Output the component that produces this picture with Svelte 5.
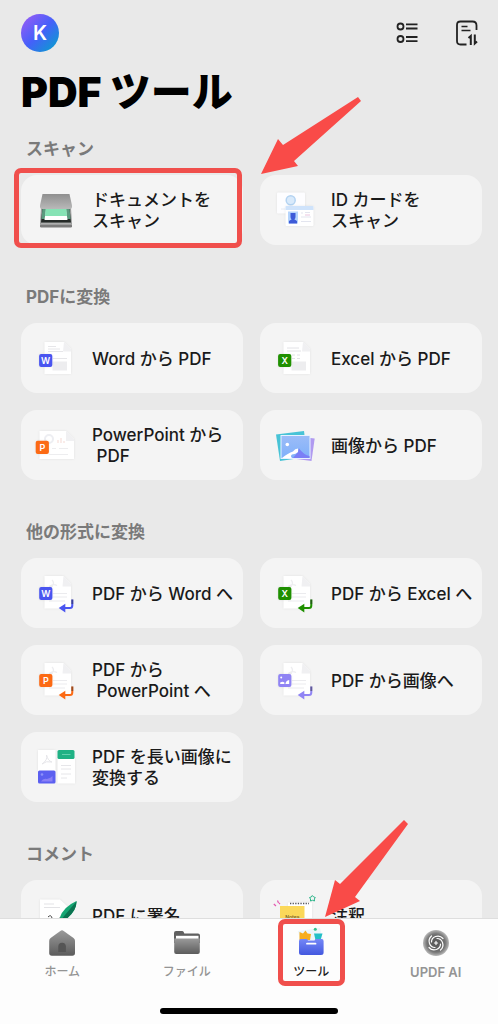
<script lang="ts">
  type Tool = { icon: string; lines: string[]; marked?: boolean };
  type Group = { title: string; tools: Tool[] };

  const groups: Group[] = [
    {
      title: "スキャン",
      tools: [
        { icon: "scanner", lines: ["ドキュメントを", "スキャン"], marked: true },
        { icon: "idcard", lines: ["ID カードを", "スキャン"] },
      ],
    },
    {
      title: "PDFに変換",
      tools: [
        { icon: "from-word", lines: ["Word から PDF"] },
        { icon: "from-excel", lines: ["Excel から PDF"] },
        { icon: "from-ppt", lines: ["PowerPoint から", " PDF"] },
        { icon: "images", lines: ["画像から PDF"] },
      ],
    },
    {
      title: "他の形式に変換",
      tools: [
        { icon: "to-word", lines: ["PDF から Word へ"] },
        { icon: "to-excel", lines: ["PDF から Excel へ"] },
        { icon: "to-ppt", lines: ["PDF から", " PowerPoint へ"] },
        { icon: "to-image", lines: ["PDF から画像へ"] },
        { icon: "long-image", lines: ["PDF を長い画像に", "変換する"] },
      ],
    },
    {
      title: "コメント",
      tools: [
        { icon: "sign", lines: ["PDF に署名"] },
        { icon: "notes", lines: ["注釈"] },
      ],
    },
  ];

  const tabs = [
    { id: "home", label: "ホーム" },
    { id: "files", label: "ファイル" },
    { id: "tools", label: "ツール" },
    { id: "ai", label: "UPDF AI", latin: true },
  ];

  const tints: Record<string, string> = {
    word: "#4a55f0",
    excel: "#1f9000",
    ppt: "#fc6a14",
    image: "#9084f4",
  };
  const letters: Record<string, string> = { word: "W", excel: "X", ppt: "P" };

  let active = $state("tools");
</script>

{#snippet badge(kind: string, x: number, y: number)}
  <g transform="translate({x} {y})">
    <rect x="-6.6" y="-6.6" width="13.2" height="13.2" rx="2" fill={tints[kind]} class="lift" />
    {#if letters[kind]}
      <text y="3.2" class="letter">{letters[kind]}</text>
    {:else}
      <circle cx="-3.6" cy="-3" r="1" fill="#fff" />
      <path d="M-4.6 3.6 V2 Q-2 .6 -.4 2 V3.6 Z M.6 3.6 Q1 .2 4.4 -.4 V3.6 Z" fill="#fff" />
    {/if}
  </g>
{/snippet}

{#snippet toolIcon(name: string)}
  <svg class="icon" viewBox="0 0 44 44" aria-hidden="true">
    {#if name === "scanner"}
      <path d="M7 20 H37 L38 36 H6Z" fill="#9a9c9b" />
      <path d="M8.500 20 H35.500 L37 34.500 H7Z" fill="#252a28" />
      <path d="M8.500 20 H12 L11 31 H7.500Z M32 20 H35.500 L36.500 31 H33Z" fill="#5b9b7f" />
      <path d="M12 21 H32 L33.500 32 H10.500Z" fill="#fff" />
      <path d="M11.500 21 H32.500 L33 28 H11Z" fill="#86e3b5" />
      <path d="M8.500 6 H35.500 L38 17.500 V19 Q38 21 36 21 H8 Q6 21 6 19 V17.500 Z" fill="url(#lid)" />
      <rect x="6" y="36" width="32" height="3.400" rx="1.200" fill="#7b7b7b" />
      <path d="M7 36 H37" stroke="#c2c2c2" />
    {:else if name === "idcard"}
      <rect x="4" y="4.500" width="28" height="21" rx="1" fill="#fdfdff" class="lift" />
      <circle cx="17.700" cy="12.300" r="4.500" fill="#d9eafb" stroke="#b4d3f1" stroke-width="1.500" />
      <path d="M8 21 H12" stroke="#e6eaf2" />
      <rect x="12.500" y="18" width="28" height="20" rx="1" fill="#fff" class="lift" />
      <path d="M12.500 22 V19 Q12.500 18 13.500 18 H39.500 Q40.500 18 40.500 19 V22Z" fill="#cfe3fb" />
      <rect x="15" y="23.500" width="10" height="12" fill="#b5d4fc" />
      <path d="M17.500 25 H22.500 V29 Q22.500 31 21.300 31.300 L24 33 V35.500 H16 V33 L18.700 31.300 Q17.500 31 17.500 29Z" fill="#3e5bd8" />
      <path d="M28 25 H30 M32 24.500 H37 M28 29 H38 M28 33.500 H38" stroke="#e3e5ef" />
      <path d="M32 27 H37" stroke="#eac5df" />
    {:else if name === "from-word" || name === "from-excel"}
      <path d="M10.500 6 H30 L37 13 V38 H10.500Z" fill="#fff" class="lift" />
      <path d="M30 6 L37 13 V15.500 H29Z" fill="#f0f0f2" />
      {#if name === "from-word"}
        <path d="M14 10.500 H22 M14 13 H26 M14 15.500 H29 M19 22.500 H33" stroke="#e6e6e9" />
      {:else}
        <path d="M14 12 H26 M14 15 H28 M19 19 H22 M24 19 H27 M19 22.500 H22 M24 22.500 H27" stroke="#e2e2e6" />
      {/if}
      <rect x="18.500" y="25.500" width="14.500" height="9" fill="#ededef" />
      {@render badge(name.slice(5), 11.7, 24.5)}
    {:else if name === "from-ppt"}
      <path d="M5.500 8 H32 L40 16 V36 H5.500Z" fill="#fff" class="lift" />
      <path d="M32 8 L40 16 V18 H32Z" fill="#f0f0f2" />
      <circle cx="15" cy="16" r="4" fill="none" stroke="#edeef2" stroke-width="2" />
      <path d="M24 20 V17 M27 20 V15 M30 20 V18" stroke="#f9e6e2" stroke-width="1.500" />
      <path d="M18 25.500 H22 M25 25.500 H34 M15 31.500 H34" stroke="#ededef" />
      {@render badge("ppt", 8.3, 24.3)}
    {:else if name === "images"}
      <path d="M3 11.500 L31 8 L34 34 L7 38Z" fill="#48c3d6" />
      <path d="M12 12 L41.700 15.500 L38.500 38 L16 35Z" fill="#b09af0" />
      <rect x="8" y="12.500" width="29" height="23" fill="url(#sky)" stroke="#e6f1ff" />
      <circle cx="14.300" cy="21.500" r="1.800" fill="#fff" />
      <path d="M20 35 L25 29 L26 25.500 Q31 32 36.500 33 V35Z" fill="#7b7ff6" />
      <path d="M9 35 Q15 30 20 28.500 Q22 25.500 25 25.500 V29 Q23 31 19 31.500 Q17 33 19 35Z" fill="#fff" />
    {:else if name.startsWith("to-")}
      <path d="M10.500 5 H29.500 L37 13 V37.500 H10.500Z" fill="#fff" class="lift" />
      <path d="M29.500 5 L37 13 V15.500 H28.500Z" fill="#f0f0f2" />
      <path d="M18 9 Q21 12 18 15.500 Q15 17 16 15 Q19 12.500 23 14.500" fill="none" stroke="#ededf0" stroke-width="1.300" />
      <path d="M19 22.500 H33 M19 26 H33 M15 30 H31" stroke="#ebebee" />
      {@render badge(name.slice(3), 11.8, 22.5)}
      <path d="M38.300 28.500 V34.500 Q38.300 37 36 37 H30" fill="none" stroke={tints[name.slice(3)]} stroke-width="2" />
      <path d="M38.300 28.500 V33" stroke="#26262c" stroke-opacity=".45" stroke-width="2" />
      <path d="M24.700 37 L31.300 32.700 V41.500Z" fill={tints[name.slice(3)]} />
    {:else if name === "long-image"}
      <rect x="4" y="5" width="17.500" height="21" fill="#fff" class="lift" />
      <path d="M12.500 10 Q14 15 8 19 Q12 15.500 18 17 Q14 16 12.500 10" fill="none" stroke="#e6e6ea" />
      <rect x="4" y="25.500" width="17.500" height="13" rx="1.500" fill="#5b5ff0" />
      <circle cx="8" cy="29.500" r="1.300" fill="#8d91fa" />
      <path d="M7 36.500 Q9 33 13 34 Q17 33 18.500 31 V36.500Z" fill="#8a80f5" />
      <rect x="23.500" y="13" width="17.500" height="25.500" fill="#fff" class="lift" />
      <rect x="23.500" y="5" width="17" height="9" rx="1.500" fill="#1fb184" />
      <path d="M28 9.500 H36.500" stroke="#63d0ae" />
      <path d="M27 20.500 H37 M27 24 H37 M27 29 H37 M27 33 H33" stroke="#e6e6e9" />
    {:else if name === "sign"}
      <path d="M6 6.500 H26 L33 13 V38 H6Z" fill="#fff" class="lift" />
      <path d="M10 11 H20 M10 14.500 H26" stroke="#e3e3e6" />
      <path d="M14 24 Q17 21 18 25 T26 25" fill="none" stroke="#444" />
      <path d="M42.500 8 Q43 18 31 27 L25 28 Q27 15 42.500 8Z" fill="#15a673" />
      <path d="M42 9 Q36 16 26 28 L31 27 Q43 18 42.500 8Z" fill="#0b7350" />
    {:else if name === "notes"}
      <path d="M15 9.500 H39 V38 H15Z" fill="#fff" class="lift" />
      <path d="M17 10.500 H36" stroke="#55555c" stroke-width="1.300" stroke-dasharray="1.300 1.300" />
      <path d="M7 13 H31.500 V38 H7Z" fill="#fbd85a" />
      <text x="19.300" y="25.500" class="memo">Notes</text>
      <path d="M39.300 2.500 L40.700 4 L42.300 4.500 L41.300 6 L41.500 8 L39.500 7.300 L37.500 8 L37.500 6 L36.500 4.500 L38.300 4Z" fill="none" stroke="#2cb58a" />
      <path d="M.8 11 L3 13 M4.500 7.500 L5.500 10 M6 11 L7 10" stroke="#e458b0" stroke-width="1.200" />
    {/if}
  </svg>
{/snippet}

{#snippet tabIcon(id: string)}
  <svg class="tab-icon" viewBox="0 0 32 32" aria-hidden="true">
    {#if id === "home"}
      <path d="M14.300 3.900 Q16 2.700 17.700 3.900 L27.500 11 Q29 12.200 29 14 V26 Q29 28.700 26.300 28.700 H5.900 Q3.200 28.700 3.200 26 V14 Q3.200 12.200 4.600 11Z" fill="url(#gray)" />
      <path d="M12.300 25 V19.500 A3.800 3.800 0 0 1 19.900 19.500 V25Z" fill="#555" />
    {:else if id === "files"}
      <path d="M3 6 Q3 4 5 4 H11 Q12.300 4 12.800 5.200 L13.300 6.500 H27 Q29 6.500 29 8.500 V16 H3Z" fill="#606060" />
      <path d="M5 8.800 H27.500 V14 H5Z" fill="#fff" />
      <path d="M3.200 11.500 H28.800 V25 Q28.800 27 26.800 27 H5.200 Q3.200 27 3.200 25Z" fill="url(#gray)" />
    {:else if id === "tools"}
      <path d="M3 4 L25 1 L28 13 H5Z" fill="#eaf5fa" />
      <path d="M4.500 5 L8 6.500 L10.500 3.500 L12.500 6.500 L16 7 L15 13 H4.500Z" fill="#f7ad1c" />
      <path d="M19 6.500 H27.500 L25.500 13 H20.500Z" fill="#22bfc6" />
      <circle cx="20.300" cy="2.300" r="1.500" fill="#35c08d" />
      <path d="M4 14 Q4 12 6 12 H12 L13 13.500 H19.500 L20.500 12 H26.600 Q28.600 12 28.600 14 V25.500 Q28.600 28 26 28 H6.500 Q4 28 4 25.500Z" fill="url(#case)" />
      <path d="M12 16.700 H20.500" stroke="#fff" stroke-width="1.800" stroke-linecap="round" />
    {:else}
      <circle cx="16" cy="16" r="13" fill="url(#orb)" />
      <g fill="none" stroke="#fff" stroke-width="1.200" stroke-linecap="round">
        {#each [0, 90, 180, 270] as turn}
          <path d="M11.500 15 Q11.500 11 15.500 9.500 Q20 8 23 11.500" transform="rotate({turn} 16 16)" />
        {/each}
        <path d="M16 14.400 V17.600 M14.400 16 H17.600" />
      </g>
    {/if}
  </svg>
{/snippet}

<!-- Gradients shared by all the icons -->
<svg class="defs" aria-hidden="true">
  <defs>
    <linearGradient id="lid" x2="0" y2="1"><stop stop-color="#8f8f8f" /><stop offset="1" stop-color="#b9b9b9" /></linearGradient>
    <linearGradient id="sky" x2="0" y2="1"><stop stop-color="#9cbcf8" /><stop offset="1" stop-color="#7fb0fa" /></linearGradient>
    <linearGradient id="gray" x2="0" y2="1"><stop stop-color="#9a9a9a" /><stop offset="1" stop-color="#5c5c5c" /></linearGradient>
    <linearGradient id="case" x2="0" y2="1"><stop stop-color="#7487f7" /><stop offset="1" stop-color="#4358df" /></linearGradient>
    <radialGradient id="orb"><stop stop-color="#505050" /><stop offset=".7" stop-color="#747474" /><stop offset="1" stop-color="#b8b8b8" /></radialGradient>
  </defs>
</svg>

<div class="screen">
  <main>
    <header>
      <button class="avatar" aria-label="アカウント">K</button>
      <div class="actions">
        <button aria-label="リスト表示">
          <svg viewBox="0 0 30 30" fill="none" stroke="#222" stroke-width="1.800">
            <circle cx="8.500" cy="8.500" r="3" /><path d="M14 6.300 H25.500 M14 10.500 H25.500" />
            <circle cx="8.500" cy="21" r="3" /><path d="M14 19 H25.500 M14 23.200 H25.500" />
          </svg>
        </button>
        <button aria-label="並べ替え">
          <svg viewBox="0 0 30 30" fill="none" stroke="#222" stroke-width="1.800">
            <path d="M14.500 26.500 H8.500 Q5 26.500 5 23 V7 Q5 3.500 8.500 3.500 H20.500 Q24.500 3.500 24.500 7.500 V12" />
            <path d="M9.500 8.500 H15.500 M9.500 12.500 H18.500" stroke-width="1.500" />
            <path d="M18.800 27 V18 L16.500 20 M22.800 16.500 V25.500 L25 23.500" stroke-width="2" />
          </svg>
        </button>
      </div>
    </header>

    <h1>PDF ツール</h1>

    {#each groups as group}
      <section>
        <h2>{group.title}</h2>
        <div class="grid">
          {#each group.tools as tool}
            <div class="cell">
              <button class="card">
                {@render toolIcon(tool.icon)}
                <span class="label">{tool.lines.join("\n")}</span>
              </button>
              {#if tool.marked}
                <span class="frame"></span>
                <svg class="pointer" viewBox="0 0 102 79" aria-hidden="true">
                  <path d="M98 1 L101 5 L34 65 L38 70 L1 78 L18 43 L23 49Z" />
                </svg>
              {/if}
            </div>
          {/each}
        </div>
      </section>
    {/each}
  </main>

  <nav>
    <div class="tabs">
      {#each tabs as tab}
        <div class="slot">
          <button class="tab" class:active={active === tab.id} onclick={() => (active = tab.id)}>
            {@render tabIcon(tab.id)}
            <span class:latin={tab.latin}>{tab.label}</span>
          </button>
          {#if tab.id === "tools"}
            <span class="frame"></span>
            <svg class="pointer" viewBox="0 0 84 98" aria-hidden="true">
              <path d="M80 0 L84 4 L31 77 L36 81 L1 97 L11 60 L16 64Z" />
            </svg>
          {/if}
        </div>
      {/each}
    </div>
    <div class="home-bar"></div>
  </nav>
</div>

<style>
  :global(body) {
    margin: 0;
    background: #e9e9e9;
  }
  .defs {
    position: absolute;
    width: 0;
    height: 0;
  }
  .screen {
    display: flex;
    flex-direction: column;
    height: 100vh;
    font-family: Inter, "Noto Sans CJK JP", sans-serif;
    color: #1a1a1a;
  }
  button {
    font: inherit;
    color: inherit;
    border: 0;
    padding: 0;
    cursor: pointer;
  }
  main {
    flex: 1;
    min-height: 0;
    overflow-y: auto;
    scrollbar-width: none;
    padding: 14px 16px 0 21px;
  }
  header {
    display: flex;
    justify-content: space-between;
    align-items: center;
  }
  .avatar {
    width: 38px;
    height: 38px;
    border-radius: 50%;
    background: linear-gradient(135deg, #9a5cf5 5%, #4560fa 50%, #06a0cc 95%);
    color: #fff;
    font-size: 20px;
    font-weight: 600;
  }
  .actions {
    display: flex;
    gap: 30px;
  }
  .actions button {
    width: 30px;
    height: 30px;
    background: none;
  }
  .actions svg {
    display: block;
  }
  h1 {
    margin: 14px 0 0;
    font-size: 41px;
    line-height: 52px;
    font-weight: 900;
    color: #000;
  }
  section {
    padding-bottom: 37px;
  }
  h2 {
    margin: 0 5px;
    padding: 19px 0 14px;
    font-size: 17px;
    line-height: 24px;
    font-weight: 700;
    color: #7a7a7a;
  }
  section:not(:first-of-type) h2 {
    padding-top: 3px;
  }
  .grid {
    display: grid;
    grid-template-columns: 1fr 1fr;
    gap: 17px;
  }
  .cell {
    position: relative;
  }
  .card {
    display: flex;
    align-items: center;
    gap: 14px;
    width: 100%;
    height: 70px;
    padding: 0 0 0 13px;
    border-radius: 16px;
    background: #f4f4f4;
    text-align: left;
  }
  .icon {
    flex: none;
    width: 44px;
    height: 44px;
  }
  .lift {
    filter: drop-shadow(0 0 1px rgb(0 0 0 / 0.08));
  }
  .letter {
    fill: #fff;
    font-size: 9px;
    font-weight: 600;
    text-anchor: middle;
  }
  .memo {
    fill: #7a642b;
    font-size: 5px;
    font-weight: 600;
    text-anchor: middle;
  }
  .label {
    padding-top: 2px;
    font-size: 17px;
    line-height: 21px;
    font-weight: 500;
    white-space: pre;
  }
  .frame {
    position: absolute;
    box-sizing: border-box;
    border: 5px solid #f04f4c;
    border-radius: 7px;
    pointer-events: none;
  }
  .cell .frame {
    inset: -7px 1px -3px -7px;
  }
  .pointer {
    position: absolute;
    fill: #f94b48;
    pointer-events: none;
  }
  .cell .pointer {
    width: 102px;
    left: calc(100% + 17px);
    bottom: 70px;
  }
  nav {
    position: relative;
    border-top: 1px solid #dedede;
    background: #fdfdfd;
    padding-bottom: 10px;
  }
  .tabs {
    display: flex;
  }
  .slot {
    position: relative;
    flex: 1;
    display: flex;
    justify-content: center;
  }
  .tab {
    display: flex;
    flex-direction: column;
    align-items: center;
    gap: 5px;
    padding: 8px 4px 0;
    background: none;
    color: #949494;
    font-size: 12px;
    line-height: 16px;
    font-weight: 500;
  }
  .tab.active {
    color: #1f1f1f;
  }
  .latin {
    font-size: 13px;
    font-weight: 600;
  }
  .tab-icon {
    width: 32px;
    height: 32px;
  }
  .slot .frame {
    top: 0;
    left: calc(50% - 33px);
    width: 67px;
    height: 67px;
  }
  .slot .pointer {
    width: 84px;
    left: calc(50% + 13px);
    bottom: 62px;
  }
  .home-bar {
    width: 178px;
    height: 6px;
    margin: 28px auto 0;
    border-radius: 3px;
    background: #000;
  }
</style>
